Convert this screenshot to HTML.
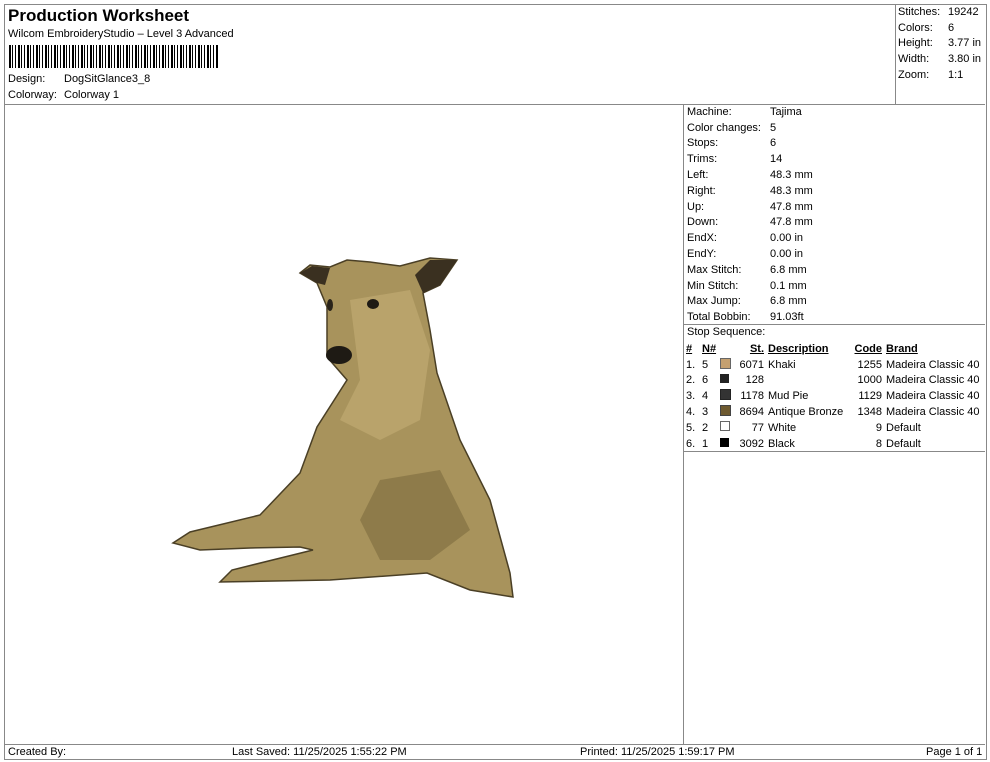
<!DOCTYPE html>
<html><head><meta charset="utf-8"><style>
body{margin:0;width:990px;height:762px;background:#fff;font-family:"Liberation Sans",Arial,sans-serif;font-size:11px;color:#000;position:relative;overflow:hidden}
.a{position:absolute}
.t td{padding:0;height:15.8px;white-space:nowrap}
</style></head><body>
<div class="a" style="left:4px;top:4px;width:981px;height:754px;border:1px solid #888"></div>
<div class="a" style="left:4px;top:104px;width:981px;border-top:1px solid #888"></div>
<div class="a" style="left:895px;top:4px;height:100px;border-left:1px solid #888"></div>
<div class="a" style="left:683px;top:104px;height:640px;border-left:1px solid #888"></div>
<div class="a" style="left:4px;top:744px;width:981px;border-top:1px solid #888"></div>
<div class="a" style="left:683px;top:324px;width:302px;border-top:1px solid #888"></div>
<div class="a" style="left:683px;top:451px;width:302px;border-top:1px solid #888"></div>

<div class="a" style="left:8px;top:6px;font-size:17px;font-weight:bold">Production Worksheet</div>
<div class="a" style="left:8px;top:28px">Wilcom EmbroideryStudio – Level 3 Advanced</div>
<div class="a" style="left:9px;top:45px;width:210px;height:23px;background:repeating-linear-gradient(90deg,#000 0 2px,#fff 2px 3px,#000 3px 4px,#fff 4px 6px,#000 6px 7px,#fff 7px 9px)"></div>
<div class="a" style="left:8px;top:73px">Design:</div><div class="a" style="left:64px;top:73px">DogSitGlance3_8</div>
<div class="a" style="left:8px;top:89px">Colorway:</div><div class="a" style="left:64px;top:89px">Colorway 1</div>

<table class="a t" style="left:898px;top:4px;border-collapse:collapse">
<tr><td style="width:50px">Stitches:</td><td>19242</td></tr>
<tr><td>Colors:</td><td>6</td></tr>
<tr><td>Height:</td><td>3.77 in</td></tr>
<tr><td>Width:</td><td>3.80 in</td></tr>
<tr><td>Zoom:</td><td>1:1</td></tr>
</table>

<table class="a t" style="left:687px;top:104px;border-collapse:collapse">
<tr><td style="width:83px">Machine:</td><td>Tajima</td></tr>
<tr><td>Color changes:</td><td>5</td></tr>
<tr><td>Stops:</td><td>6</td></tr>
<tr><td>Trims:</td><td>14</td></tr>
<tr><td>Left:</td><td>48.3 mm</td></tr>
<tr><td>Right:</td><td>48.3 mm</td></tr>
<tr><td>Up:</td><td>47.8 mm</td></tr>
<tr><td>Down:</td><td>47.8 mm</td></tr>
<tr><td>EndX:</td><td>0.00 in</td></tr>
<tr><td>EndY:</td><td>0.00 in</td></tr>
<tr><td>Max Stitch:</td><td>6.8 mm</td></tr>
<tr><td>Min Stitch:</td><td>0.1 mm</td></tr>
<tr><td>Max Jump:</td><td>6.8 mm</td></tr>
<tr><td>Total Bobbin:</td><td>91.03ft</td></tr>
</table>
<div class="a" style="left:687px;top:326px">Stop Sequence:</div>
<table class="a t" style="left:686px;top:341px;border-collapse:collapse">
<tr style="font-weight:bold;text-decoration:underline"><td style="width:16px">#</td><td style="width:18px">N#</td><td style="width:14px"></td><td style="width:30px;text-align:right">St.</td><td style="width:84px;padding-left:4px">Description</td><td style="width:30px;text-align:right">Code</td><td style="padding-left:4px">Brand</td></tr>
<tr><td>1.</td><td>5</td><td><span style="display:inline-block;width:9px;height:9px;background:#c4a070;border:1px solid #666"></span></td><td style="text-align:right">6071</td><td style="padding-left:4px">Khaki</td><td style="text-align:right">1255</td><td style="padding-left:4px">Madeira Classic 40</td></tr>
<tr><td>2.</td><td>6</td><td><span style="display:inline-block;width:9px;height:9px;background:#222"></span></td><td style="text-align:right">128</td><td></td><td style="text-align:right">1000</td><td style="padding-left:4px">Madeira Classic 40</td></tr>
<tr><td>3.</td><td>4</td><td><span style="display:inline-block;width:9px;height:9px;background:#333;border:1px solid #222"></span></td><td style="text-align:right">1178</td><td style="padding-left:4px">Mud Pie</td><td style="text-align:right">1129</td><td style="padding-left:4px">Madeira Classic 40</td></tr>
<tr><td>4.</td><td>3</td><td><span style="display:inline-block;width:9px;height:9px;background:#6e5a30;border:1px solid #444"></span></td><td style="text-align:right">8694</td><td style="padding-left:4px">Antique Bronze</td><td style="text-align:right">1348</td><td style="padding-left:4px">Madeira Classic 40</td></tr>
<tr><td>5.</td><td>2</td><td><span style="display:inline-block;width:8px;height:8px;background:#fff;border:1px solid #666"></span></td><td style="text-align:right">77</td><td style="padding-left:4px">White</td><td style="text-align:right">9</td><td style="padding-left:4px">Default</td></tr>
<tr><td>6.</td><td>1</td><td><span style="display:inline-block;width:9px;height:9px;background:#000"></span></td><td style="text-align:right">3092</td><td style="padding-left:4px">Black</td><td style="text-align:right">8</td><td style="padding-left:4px">Default</td></tr>
</table>

<svg class="a" style="left:0;top:0" width="990" height="762">
<polygon fill="#a8935c" stroke="#4a3f25" stroke-width="1.5" points="300,273 310,265 330,267 347,260 370,262 400,266 430,258 457,260 440,285 423,293 430,330 437,373 460,440 490,500 510,573 513,597 470,590 427,573 330,580 220,582 232,570 313,550 300,547 250,548 200,550 173,543 190,532 260,515 300,473 317,427 347,380 327,357 327,307 317,283"/>
<polygon fill="#c4ad75" opacity=".6" points="350,300 410,290 430,350 420,420 380,440 340,420 360,380"/>
<polygon fill="#7d6a3e" opacity=".6" points="380,480 440,470 470,530 430,560 380,560 360,520"/>
<polygon fill="#3a3020" points="300,273 312,266 330,268 325,285 317,283"/>
<polygon fill="#3a3020" points="430,260 457,260 440,285 423,293 415,275"/>
<ellipse cx="339" cy="355" rx="13" ry="9" fill="#1e1a14"/>
<ellipse cx="373" cy="304" rx="6" ry="5" fill="#1e1a14"/>
<ellipse cx="330" cy="305" rx="3" ry="6" fill="#2a241a"/>
</svg>

<div class="a" style="left:8px;top:746px">Created By:</div>
<div class="a" style="left:232px;top:746px">Last Saved: 11/25/2025 1:55:22 PM</div>
<div class="a" style="left:580px;top:746px">Printed: 11/25/2025 1:59:17 PM</div>
<div class="a" style="left:926px;top:746px">Page 1 of 1</div>
</body></html>
